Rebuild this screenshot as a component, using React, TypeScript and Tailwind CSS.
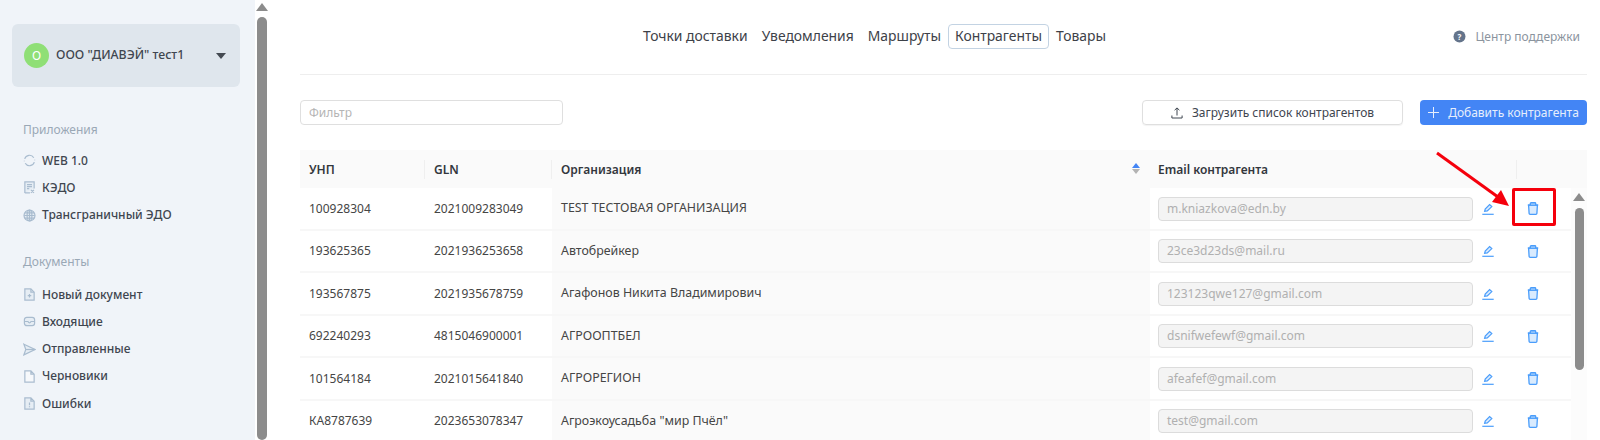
import React from "react";

const font = { fontFamily: '"Noto Sans", "Open Sans", sans-serif' };

const rows = [
  ["100928304", "2021009283049", "TEST ТЕСТОВАЯ ОРГАНИЗАЦИЯ", "m.kniazkova@edn.by"],
  ["193625365", "2021936253658", "Автобрейкер", "23ce3d23ds@mail.ru"],
  ["193567875", "2021935678759", "Агафонов Никита Владимирович", "123123qwe127@gmail.com"],
  ["692240293", "4815046900001", "АГРООПТБЕЛ", "dsnifwefewf@gmail.com"],
  ["101564184", "2021015641840", "АГРОРЕГИОН", "afeafef@gmail.com"],
  ["КА8787639", "2023653078347", 'Агроэкоусадьба "мир Пчёл"', "test@gmail.com"],
];

function Ico({ children }: { children: React.ReactNode }) {
  return (
    <svg width="13" height="13" viewBox="0 0 14 14" fill="none" stroke="#a9bccf" strokeWidth="1.300" className="shrink-0">
      {children}
    </svg>
  );
}

const icons: Record<string, React.ReactNode> = {
  web: (
    <>
      <path d="M1.800 5.200A5.400 5.400 0 0 1 11.600 4" />
      <path d="M12.200 8.800A5.400 5.400 0 0 1 2.400 10" />
      <path d="M1.400 7.200v.6M12.600 6.200v.6" />
    </>
  ),
  kedo: (
    <>
      <path d="M2 12.800V1h10v7" fill="#e6edf4" />
      <path d="M4.300 3.800h5.400M4.300 6h5.400M4.300 8.200h2.400" />
      <path d="M2 12.800h5.500M8.500 9.500l3.300 3.300M11.800 9.500l-3.300 3.300" />
    </>
  ),
  globe: (
    <>
      <circle cx="7" cy="7" r="5.900" fill="#e6edf4" />
      <ellipse cx="7" cy="7" rx="2.600" ry="5.900" />
      <path d="M1.300 7h11.400M2 4.200h10M2 9.800h10M7 1.300v11.400" />
    </>
  ),
  newdoc: (
    <>
      <path d="M2 1h6.500L12 4.500V13H2z" fill="#e6edf4" />
      <path d="M8.500 1v3.500H12M7 6.400v3.800M5.100 8.300h3.800" />
    </>
  ),
  inbox: (
    <>
      <rect x="1.500" y="2.500" width="11" height="9" rx="2.600" fill="#e6edf4" />
      <path d="M1.500 7h3.900c.2 1 .8 1.400 1.600 1.400s1.400-.4 1.600-1.400h3.900" />
    </>
  ),
  send: (
    <>
      <path d="M1 1.300l12 5.700-12 5.700 2-5.700z" fill="#e6edf4" />
      <path d="M3 7h10" />
    </>
  ),
  draft: <path d="M2 1h6.500L12 4.500V13H2zM8.500 1v3.500H12" fill="#f6f8fb" />,
  err: (
    <>
      <path d="M2 1h6.500L12 4.500V13H2zM8.500 1v3.500H12" fill="#e6edf4" />
      <path d="M7 5.800v3.200M7 10v1" />
    </>
  ),
};

function NavItem({ icon, label }: { icon: string; label: string }) {
  return (
    <div className="flex items-center h-[27.300px] text-[12px] font-medium text-[#3f4650]">
      <Ico>{icons[icon]}</Ico>
      <span className="ml-[6px]">{label}</span>
    </div>
  );
}

function Pencil() {
  return (
    <svg width="12" height="12" viewBox="0 0 12 12" fill="none" stroke="#4a9dfb" strokeWidth="1.200" className="shrink-0">
      <path d="M2.600 8.300l.6-2.300 4.400-4.500 2.200 2.100-4.500 4.300z" fill="#d9ebfe" />
      <path d="M.3 11.300h11.400" />
    </svg>
  );
}

function Trash() {
  return (
    <svg width="12" height="13" viewBox="0 0 12 13" fill="none" stroke="#4a9dfb" strokeWidth="1.300" className="shrink-0">
      <path d="M1.600 3.200l.5 8.200a1 1 0 0 0 1 .9h5.800a1 1 0 0 0 1-.9l.5-8.200z" fill="#d9ebfe" />
      <path d="M.8 3.100h10.400" />
      <path d="M3.300 3V1.500a.8.8 0 0 1 .8-.8h3.800a.8.8 0 0 1 .8.8V3" fill="#8cc2fc" />
    </svg>
  );
}

function Tab({ label, active }: { label: string; active?: boolean }) {
  return (
    <div
      className={
        "h-[25px] px-[6px] flex items-center rounded-[4px] border text-[13.900px] text-[#3d4148] " +
        (active ? "border-[#c3d3e3]" : "border-transparent")
      }
    >
      {label}
    </div>
  );
}

function Row({ r }: { r: string[] }) {
  return (
    <div className="flex h-[42.500px] border-b-2 border-[#f7f7f7] text-[12px] text-[#454545]">
      <div className="w-[125px] pl-[9px] pt-[1px] flex items-center">{r[0]}</div>
      <div className="w-[127px] pl-[9px] pt-[1px] flex items-center">{r[1]}</div>
      <div className="w-[598px] pl-[9px] pt-[1px] flex items-center bg-[#fafafa] text-[12.400px]">{r[2]}</div>
      <div className="flex-1 pl-[8px] pt-[1px] flex items-center">
        <div className="w-[315px] h-[24px] border border-[#dcdcdc] rounded-[4px] bg-[#f4f4f4] pl-[8px] flex items-center text-[#b0b0b0]">
          {r[3]}
        </div>
        <div className="ml-[9px] w-[12px] flex items-center">
          <Pencil />
        </div>
        <div className="ml-[33px] w-[12px] flex items-center">
          <Trash />
        </div>
      </div>
    </div>
  );
}

export default function App() {
  return (
    <div style={font} className="flex h-[440px] w-[1600px] overflow-hidden bg-white">
      <aside className="w-[255px] shrink-0 bg-[#f0f4f9] pt-[24px] px-[12px]">
        <div className="h-[63px] w-[228px] rounded-[6px] bg-[#dfe6ed] flex items-center pl-[12px] pr-[14px]">
          <div className="w-[25px] h-[25px] rounded-full bg-[#8fdf76] flex items-center justify-center text-white text-[12px]">
            О
          </div>
          <div className="ml-[7px] text-[12.300px] font-medium text-[#3f4650]">ООО "ДИАВЭЙ" тест1</div>
          <div className="ml-auto w-0 h-0 border-l-[5px] border-r-[5px] border-t-[6px] border-l-transparent border-r-transparent border-t-[#444a52]" />
        </div>
        <div className="pl-[11px]">
          <div className="mt-[33px] text-[12px] text-[#9aa8b6] h-[20px] flex items-center mb-[7px]">Приложения</div>
          <NavItem icon="web" label="WEB 1.0" />
          <NavItem icon="kedo" label="КЭДО" />
          <NavItem icon="globe" label="Трансграничный ЭДО" />
          <div className="mt-[23px] text-[12px] text-[#9aa8b6] h-[20px] flex items-center mb-[9px]">Документы</div>
          <NavItem icon="newdoc" label="Новый документ" />
          <NavItem icon="inbox" label="Входящие" />
          <NavItem icon="send" label="Отправленные" />
          <NavItem icon="draft" label="Черновики" />
          <NavItem icon="err" label="Ошибки" />
        </div>
      </aside>

      <div className="w-[13px] shrink-0 pt-[3px] flex flex-col items-center overflow-hidden">
        <div className="w-0 h-0 ml-[1px] border-l-[6px] border-r-[6px] border-b-[8px] border-l-transparent border-r-transparent border-b-[#8c8c8c]" />
        <div className="mt-[6px] w-[10px] h-[600px] rounded-full bg-[#8c8c8c]" />
      </div>

      <main className="flex-1 min-w-0 pl-[32px] pr-[13px]">
        <header className="flex items-center h-[75px] border-b border-[#eeeeee]">
          <div className="ml-[336px] flex mb-[1px]">
            <Tab label="Точки доставки" />
            <Tab label="Уведомления" />
            <Tab label="Маршруты" />
            <Tab label="Контрагенты" active />
            <Tab label="Товары" />
          </div>
          <div className="ml-auto mr-[7px] mb-[1px] flex items-center text-[12px] text-[#8b949e]">
            <svg width="13" height="13" viewBox="0 0 13 13" className="mr-[9px]">
              <circle cx="6.500" cy="6.500" r="6" fill="#64748b" />
              <text x="6.500" y="9.500" textAnchor="middle" fontSize="8" fontWeight="700" fill="#fff">?</text>
            </svg>
            Центр поддержки
          </div>
        </header>

        <div className="flex items-center h-[25px] mt-[25px]">
          <div className="w-[263px] h-[25px] border border-[#dfdfdf] rounded-[4px] pl-[8px] flex items-center text-[12px] text-[#b5b5b5]">
            Фильтр
          </div>
          <div className="ml-auto w-[261px] h-[25px] border border-[#dfdfdf] rounded-[4px] flex items-center justify-center text-[12px] text-[#3f4650] shadow-[0_1px_1px_rgba(0,0,0,0.05)]">
            <svg width="12" height="12" viewBox="0 0 12 12" fill="none" stroke="#3f4650" strokeWidth="1" className="mr-[9px]">
              <path d="M6 8.500V1M3.600 3.200L6 .9l2.400 2.300M.9 8.500v2.500h10.200V8.500" />
            </svg>
            Загрузить список контрагентов
          </div>
          <div className="ml-[17px] w-[167px] h-[25px] rounded-[4px] bg-[#4385f5] flex items-center justify-center text-[12px] text-[#e6eefc]">
            <svg width="11" height="11" viewBox="0 0 11 11" stroke="#e6eefc" strokeWidth="1" className="mr-[9px]">
              <path d="M5.500 0v11M0 5.500h11" />
            </svg>
            Добавить контрагента
          </div>
        </div>

        <div className="mt-[25px] relative">
          <div className="flex h-[38px] pt-[1px] bg-[#fafafa] text-[12px] font-semibold text-[#33373d]">
            <div className="w-[125px] pl-[9px] flex items-center relative">
              УНП
              <div className="absolute right-0 top-[9px] h-[19px] w-px bg-[#efefef]" />
            </div>
            <div className="w-[127px] pl-[9px] flex items-center relative">
              GLN
              <div className="absolute right-0 top-[9px] h-[19px] w-px bg-[#efefef]" />
            </div>
            <div className="w-[598px] pl-[9px] flex items-center relative">
              Организация
              <div className="absolute right-[10px] top-[12px] flex flex-col gap-[1px]">
                <div className="w-0 h-0 border-l-[4px] border-r-[4px] border-b-[5px] border-l-transparent border-r-transparent border-b-[#4385f5]" />
                <div className="w-0 h-0 border-l-[4px] border-r-[4px] border-t-[5px] border-l-transparent border-r-transparent border-t-[#b3b3b3]" />
              </div>
            </div>
            <div className="w-[367px] pl-[8px] flex items-center relative">
              Email контрагента
              <div className="absolute right-0 top-[9px] h-[19px] w-px bg-[#efefef]" />
            </div>
            <div className="flex-1" />
          </div>
          <div className="flex h-[256px]">
            <div className="flex-1 min-w-0">
              {rows.map((r) => (
                <Row key={r[0]} r={r} />
              ))}
            </div>
            <div className="w-[16px] shrink-0 bg-[#fcfcfc] flex flex-col items-center pt-[5px]">
              <div className="w-0 h-0 border-l-[6px] border-r-[6px] border-b-[8px] border-l-transparent border-r-transparent border-b-[#8c8c8c]" />
              <div className="mt-[7px] w-[9px] h-[162px] rounded-full bg-[#8c8c8c]" />
            </div>
          </div>

          <svg width="130" height="90" viewBox="0 0 130 90" fill="none" className="absolute left-[1130px] top-[0px] pointer-events-none">
            <path d="M7 3 L68 47" stroke="#f5000c" strokeWidth="3" />
            <path d="M79 56 L62 52 L71 40 Z" fill="#f5000c" />
          </svg>
          <div className="absolute left-[1212px] top-[38px] w-[44px] h-[38px] border-[3px] border-[#f5000c] rounded-[2px]" />
        </div>
      </main>
    </div>
  );
}
